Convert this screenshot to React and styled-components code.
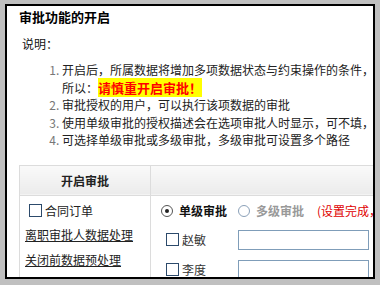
import React from 'react'
import styled, { createGlobalStyle } from 'styled-components'

const Global = createGlobalStyle`
  html, body {
    margin: 0;
    background: #c0c0c0;
  }
  body {
    padding: 4px 0 0 5px;
    font-family: "Noto Sans CJK SC", "Liberation Sans", sans-serif;
    font-size: 12px;
    color: #222;
  }
`

const Panel = styled.div`
  width: 370px;
  height: 275px;
  box-sizing: border-box;
  border: 2px solid #000;
  background: #fff;
  overflow: hidden;
  padding: 2px 0 0 12px;
`

const Title = styled.h3`
  margin: 0;
  font-size: 13px;
  line-height: 18px;
  font-weight: bold;
  color: #000;
  white-space: nowrap;
`

const Label = styled.div`
  margin: 9px 0 0 3px;
  line-height: 18px;
  color: #111;
`

const List = styled.ol`
  margin: 8px 0 0;
  padding: 0 0 0 43px;
  white-space: nowrap;
  line-height: 17.5px;
  color: #222;

  li::marker {
    color: #777;
  }
`

const Warn = styled.span`
  background: #ffff00;
  color: #ff0000;
  font-weight: bold;
  font-size: 13px;
`

const Table = styled.table`
  margin-top: 16px;
  border-collapse: collapse;
  width: 420px;
  table-layout: fixed;
`

const Th = styled.th`
  height: 29px;
  padding: 0;
  border: 1px solid #dcdcdc;
  background: linear-gradient(#fafafa, #ebebeb);
  font-size: 12px;
  font-weight: bold;
  color: #222;
  width: ${p => p.$w || 'auto'};
`

const Td = styled.td`
  vertical-align: top;
  border: 1px solid #dcdcdc;
  padding: 0;
`

const LeftCol = styled.div`
  display: flex;
  flex-direction: column;
  padding: 6px 0 0 5px;
  gap: 4px;
`

const RightCol = styled.div`
  display: flex;
  flex-direction: column;
  padding: 6px 0 0 10px;
`

const Line = styled.div`
  display: flex;
  align-items: center;
  height: ${p => p.$h || 18}px;
  margin-bottom: ${p => p.$mb || 0}px;
  white-space: nowrap;
`

const Box = styled.span`
  display: inline-block;
  width: 11px;
  height: 11px;
  border: 1px solid #2c4a6b;
  background: #fff;
  margin: ${p => p.$m || '0 3px 0 4px'};
  flex: none;
`

const Radio = styled.span`
  position: relative;
  display: inline-block;
  width: 10px;
  height: 10px;
  border: 1px solid ${p => (p.$on ? '#555' : '#8aa0b8')};
  border-radius: 50%;
  margin-right: 6px;
  flex: none;

  &::after {
    content: '';
    display: ${p => (p.$on ? 'block' : 'none')};
    position: absolute;
    left: 3px;
    top: 3px;
    width: 4px;
    height: 4px;
    border-radius: 50%;
    background: #222;
  }
`

const Link = styled.a`
  color: #222;
  text-decoration: underline;
  line-height: 21px;
  white-space: nowrap;
`

const Opt = styled.span`
  font-weight: bold;
  color: ${p => p.$muted ? '#999' : '#111'};
  margin-right: ${p => p.$mr || 0}px;
`

const Note = styled.span`
  color: #e00000;
`

const Name = styled.span`
  width: 56px;
  color: #333;
`

const Input = styled.span`
  display: inline-block;
  width: 129px;
  height: 18px;
  border: 1px solid #7f9db9;
  background: #fff;
`

export default function App() {
  return (
    <>
      <Global />
      <Panel>
        <Title>审批功能的开启</Title>
        <Label>说明：</Label>
        <List>
          <li>
            开启后，所属数据将增加多项数据状态与约束操作的条件，
            <br />
            所以：<Warn>请慎重开启审批！</Warn>
          </li>
          <li>审批授权的用户，可以执行该项数据的审批</li>
          <li>使用单级审批的授权描述会在选项审批人时显示，可不填，</li>
          <li>可选择单级审批或多级审批，多级审批可设置多个路径</li>
        </List>
        <Table>
          <thead>
            <tr>
              <Th $w="130px">开启审批</Th>
              <Th />
            </tr>
          </thead>
          <tbody>
            <tr>
              <Td>
                <LeftCol>
                  <Line>
                    <Box />合同订单
                  </Line>
                  <Link>离职审批人数据处理</Link>
                  <Link>关闭前数据预处理</Link>
                </LeftCol>
              </Td>
              <Td>
                <RightCol>
                  <Line $mb={5}>
                    <Radio $on />
                    <Opt $mr={11}>单级审批</Opt>
                    <Radio />
                    <Opt $muted $mr={13}>多级审批</Opt>
                    <Note>(设置完成，</Note>
                  </Line>
                  <Line $h={30}>
                    <Box $m="0 3px 0 5px" />
                    <Name>赵敏</Name>
                    <Input />
                  </Line>
                  <Line $h={30}>
                    <Box $m="0 3px 0 5px" />
                    <Name>李度</Name>
                    <Input />
                  </Line>
                </RightCol>
              </Td>
            </tr>
          </tbody>
        </Table>
      </Panel>
    </>
  )
}
